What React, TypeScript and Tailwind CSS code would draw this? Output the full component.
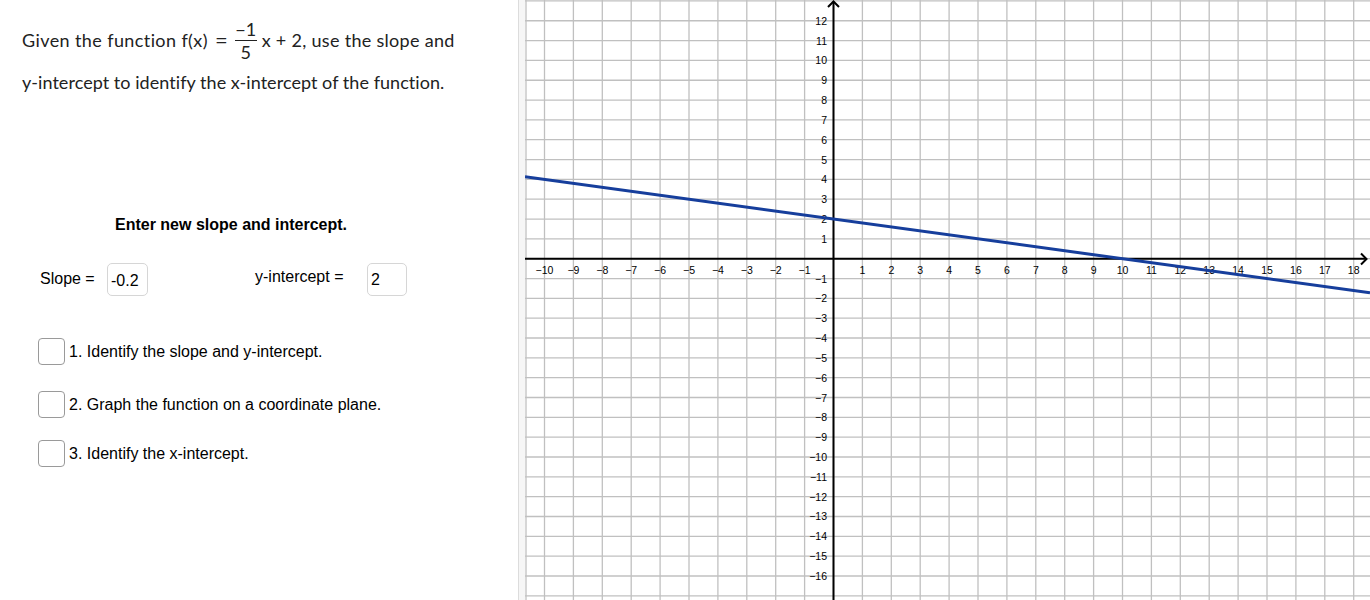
import React from "react";

const X0 = 833.5;
const UX = 28.9;
const Y0 = 258.7;
const UY = 19.83;
const LEFT = 525;
const RIGHT = 1370;

const minus = (n: number) => (n < 0 ? `\u2212${-n}` : `${n}`);

function Graph() {
  const vLines: number[] = [];
  for (let i = -11; i <= 19; i++) {
    const x = X0 + i * UX;
    if (x > LEFT + 2 && x < RIGHT) vLines.push(x);
  }
  const hLines: number[] = [];
  for (let j = -17; j <= 13; j++) {
    const y = Y0 - j * UY;
    if (y > -1 && y < 601) hLines.push(y);
  }
  const xLabels: number[] = [];
  for (let i = -10; i <= 18; i++) if (i !== 0) xLabels.push(i);
  const yLabels: number[] = [];
  for (let j = -16; j <= 12; j++) if (j !== 0) yLabels.push(j);

  const f = (px: number) => {
    const x = (px - X0) / UX;
    return Y0 - (-0.2 * x + 2) * UY;
  };

  return (
    <svg
      className="block h-[600px] w-[845px] shrink-0"
      viewBox={`${LEFT} 0 ${RIGHT - LEFT} 600`}
      style={{ fontFamily: '"Liberation Sans", Arial, sans-serif' }}
    >
      <rect x={LEFT} y={0} width={RIGHT - LEFT} height={600} fill="#ffffff" />
      <g stroke="#c0c0c0" strokeWidth={1.3}>
        <line x1={LEFT + 1} y1={0} x2={LEFT + 1} y2={600} />
        {vLines.map((x) => (
          <line key={`v${x}`} x1={x} y1={0} x2={x} y2={600} />
        ))}
        {hLines.map((y) => (
          <line key={`h${y}`} x1={LEFT} y1={y} x2={RIGHT} y2={y} />
        ))}
      </g>
      <g fontSize={10.5} fill="#000000">
        {xLabels.map((i) => (
          <text key={`xl${i}`} x={X0 + i * UX} y={274} textAnchor="middle">
            {minus(i)}
          </text>
        ))}
        {yLabels.map((j) => (
          <text key={`yl${j}`} x={827} y={Y0 - j * UY + 4} textAnchor="end">
            {minus(j)}
          </text>
        ))}
      </g>
      <g stroke="#000000" strokeWidth={2} fill="none">
        <line x1={LEFT} y1={Y0} x2={1366} y2={Y0} />
        <line x1={X0} y1={1.5} x2={X0} y2={600} />
        <path d="M828 7 L833.5 1.5 L839 7" />
        <path d="M1361 253.5 L1366.5 259 L1361 264.5" />
      </g>
      <line x1={LEFT} y1={f(LEFT)} x2={RIGHT} y2={f(RIGHT)} stroke="#163e9c" strokeWidth={3} />
    </svg>
  );
}

function Checkbox({ label, className }: { label: string; className: string }) {
  return (
    <div className={`flex items-center ${className}`}>
      <div className="h-[27px] w-[27px] rounded-[4px] border border-[#9a9a9a] bg-white" />
      <span className="ml-[4px] text-[16px] leading-[20px] text-black">{label}</span>
    </div>
  );
}

export default function App() {
  return (
    <div className="flex h-[600px] w-[1370px] overflow-hidden bg-white">
      <div className="flex w-[518px] shrink-0 flex-col" style={{ fontFamily: '"Liberation Sans", Arial, sans-serif' }}>
        <div className="pl-[22px] text-[18px] text-[#222]" style={{ fontFamily: 'Lato, "Noto Sans", sans-serif' }}>
          <div className="mt-[17px] flex h-[46px] items-center whitespace-nowrap">
            <span className="tracking-[0.4px]">Given the function f(x)</span>
            <span className="mx-[7px] text-[22px] leading-[22px]">=</span>
            <span className="inline-flex flex-col items-center">
              <span className="leading-[22px]">−1</span>
              <span className="block h-[1px] w-[22px] bg-[#222]" />
              <span className="leading-[22px]">5</span>
            </span>
            <span className="ml-[5px] tracking-[0.3px]">x + 2, use the slope and</span>
          </div>
          <div className="mt-[1px] flex h-[36px] items-center whitespace-nowrap tracking-[0.05px]">
            y-intercept to identify the x-intercept of the function.
          </div>
        </div>

        <div className="ml-[115px] mt-[113px] flex h-[24px] items-center text-[16px] font-bold text-black">
          Enter new slope and intercept.
        </div>

        <div className="ml-[40px] mt-[25px] flex h-[34px] items-center text-[16px] text-black">
          <span className="w-[67px]">Slope =</span>
          <div className="flex h-[33px] w-[41px] items-center rounded-[5px] border border-[#d6d6d6] bg-white pl-[3px] pt-[4px]">
            -0.2
          </div>
          <span className="ml-[107px] w-[112px] -translate-y-[2px]">y-intercept =</span>
          <div className="flex h-[33px] w-[40px] items-center rounded-[5px] border border-[#d6d6d6] bg-white pl-[3px] pt-[2px]">
            2
          </div>
        </div>

        <Checkbox className="ml-[38px] mt-[42px]" label="1. Identify the slope and y-intercept." />
        <Checkbox className="ml-[38px] mt-[26px]" label="2. Graph the function on a coordinate plane." />
        <Checkbox className="ml-[38px] mt-[22px]" label="3. Identify the x-intercept." />
      </div>
      <div className="w-[7px] shrink-0 border-l border-[#dcdcdc] bg-[#f6f6f6]" />
      <Graph />
    </div>
  );
}
